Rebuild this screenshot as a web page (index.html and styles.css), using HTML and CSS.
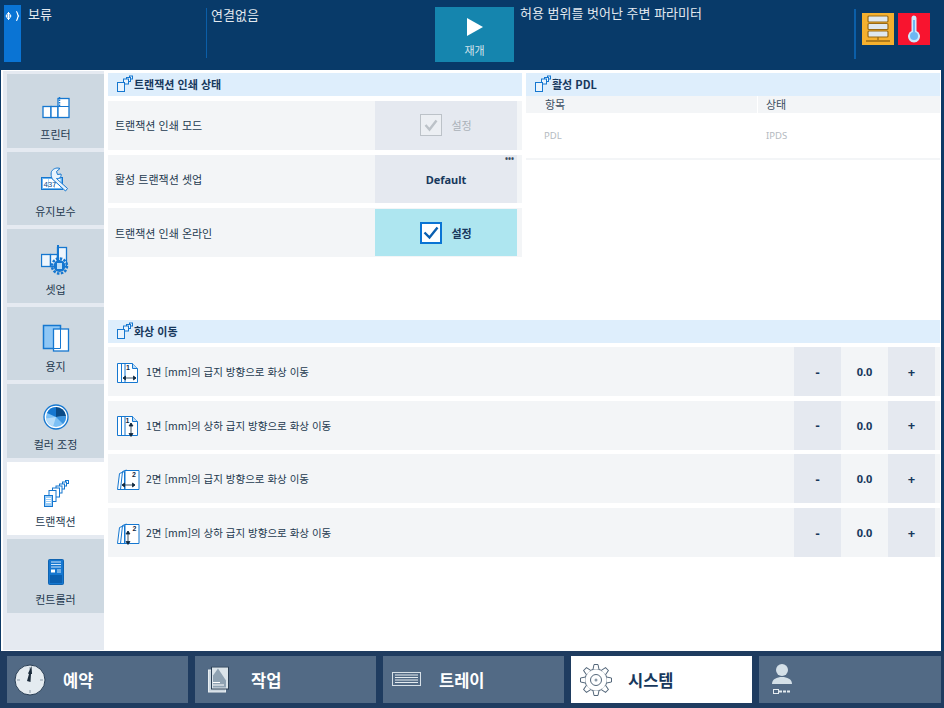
FILE: index.html
```html
<!DOCTYPE html>
<html lang="ko">
<head>
<meta charset="utf-8">
<title>트랜잭션</title>
<link rel="stylesheet" href="styles.css">
</head>
<body>
<svg class="defs" width="0" height="0" aria-hidden="true">
  <symbol id="tx-small" viewBox="0 0 18 18">
    <g fill="#eaf4fd" stroke="#1577d0" stroke-width="1">
      <rect x="13.500" y="1" width="3" height="3"/>
      <rect x="10.500" y="2.500" width="4" height="4"/>
      <rect x="7.500" y="4" width="5" height="5"/>
      <rect x="1.500" y="7.500" width="7" height="9"/>
    </g>
  </symbol>
  <symbol id="shift" viewBox="0 0 24 24">
    <path d="M1.500 3.500h15l5 5v14h-20z" fill="#fff" stroke="#1577d0"/>
    <path d="M5.500 3.500v19M9 3.500v19" stroke="#1577d0" fill="none"/>
    <path d="M16.500 3.500v5h5" fill="#bcdcf7" stroke="#1577d0"/>
  </symbol>
  <symbol id="tooth" viewBox="0 0 34 34">
    <path d="M14 6.500L15 1.500H19L20 6.500" fill="#fff" stroke="#54677a"/>
  </symbol>
</svg>
<div class="app">
  <header class="topbar">
    <div class="hold"><svg width="17" height="12" viewBox="0 0 17 12"><path d="M2 6h5M4.500 2v8M4 3l-2 3 2 3M5 3l2 3-2 3" stroke="#fff" fill="none"/><path d="M12 1.500c2 0 1 3 2.500 4.500-1.500 1.500-.5 4.500-2.500 4.500" stroke="#fff" fill="none" stroke-width="1.200"/></svg></div>
    <div class="status status-hold">보류</div>
    <div class="status status-conn">연결없음</div>
    <button class="resume" type="button">
      <svg width="16" height="18" viewBox="0 0 16 18"><path d="M0 0l16 9-16 9z" fill="#fff"/></svg>
      <span>재개</span>
    </button>
    <div class="status status-env">허용 범위를 벗어난 주변 파라미터</div>
    <div class="alerts">
      <div class="alert alert-amber">
        <svg width="24" height="30" viewBox="0 0 24 30"><g fill="#dfe8ef" stroke="#9a6a14" stroke-width="1.200"><rect x="2" y="2" width="20" height="6" rx="1"/><rect x="2" y="9.500" width="20" height="6" rx="1"/><rect x="2" y="17" width="20" height="6" rx="1"/></g><path d="M12 23v3M0 27h24" stroke="#9a6a14" stroke-width="1.300" fill="none"/></svg>
      </div>
      <div class="alert alert-red">
        <svg width="14" height="28" viewBox="0 0 14 28"><path d="M4.500 3a2.500 2.500 0 0 1 5 0v13a6 6 0 1 1-5 0z" fill="#cfe8fb"/><path d="M6 5h2v12h-2z" fill="#6db6f2"/><circle cx="7" cy="21" r="4" fill="#6db6f2"/></svg>
      </div>
    </div>
  </header>

  <main class="main">
    <nav class="sidebar">
      <a class="tile">
        <svg class="tile-icon" width="28" height="24" viewBox="0 0 28 24"><g fill="#fff" stroke="#1577d0" stroke-width="1.300"><rect x="1" y="10.500" width="8" height="11"/><rect x="9" y="10.500" width="7" height="11"/><rect x="16" y="2.500" width="11" height="19"/></g><path d="M16 10.500h11" stroke="#1577d0"/><path d="M17.500 1v9" stroke="#1577d0" stroke-width="1.500" stroke-dasharray="1.500 1"/></svg>
        <span>프린터</span>
      </a>
      <a class="tile">
        <svg class="tile-icon" width="30" height="30" viewBox="0 0 30 30"><rect x="0.500" y="10.500" width="21" height="12" fill="#6db6f2" stroke="#1577d0"/><rect x="2" y="12" width="5.500" height="9" fill="#fff"/><rect x="8" y="12" width="5.500" height="9" fill="#fff"/><rect x="14" y="12" width="5.500" height="9" fill="#fff"/><text class="digits" x="2.500" y="20">437</text><path d="M10.500 4.500c2-3.500 6-4 8.500-3l-3.500 3 1 3 3.500-.5c.8 2.500-1.500 5-4.500 4.500l11 10-2 2.500-11.500-10.500c-2.500-1-3.500-6-2.500-9z" fill="#e8f3fc" stroke="#1577d0"/></svg>
        <span>유지보수</span>
      </a>
      <a class="tile">
        <svg class="tile-icon" width="30" height="30" viewBox="0 0 30 30"><g fill="#eef6fd" stroke="#1577d0" stroke-width="1.300"><rect x="0.500" y="9.500" width="9" height="12"/><rect x="9.500" y="9.500" width="7" height="12"/><rect x="16.500" y="2.500" width="9" height="19"/></g><path d="M17 0v16" stroke="#1577d0" stroke-width="2"/><circle cx="18.500" cy="21" r="6" fill="#1577d0"/><circle cx="18.500" cy="21" r="7.500" fill="none" stroke="#1577d0" stroke-width="2.500" stroke-dasharray="2.500 1.430"/><rect x="16" y="18" width="5" height="6" fill="#b9dcf7"/></svg>
        <span>셋업</span>
      </a>
      <a class="tile">
        <svg class="tile-icon" width="28" height="28" viewBox="0 0 28 28"><rect x="1.500" y="1.500" width="17" height="23" fill="#8fc7f5" stroke="#1577d0" stroke-width="1.500"/><rect x="11.500" y="5" width="15" height="22" fill="#fff" stroke="#1577d0" stroke-width="1.300"/><path d="M11.500 24.500h7V5" fill="none" stroke="#1577d0"/></svg>
        <span>용지</span>
      </a>
      <a class="tile">
        <svg class="tile-icon" width="26" height="26" viewBox="0 0 26 26"><circle cx="13" cy="13" r="12" fill="#fff" stroke="#1577d0" stroke-width="1.300"/><circle cx="13" cy="13" r="10" fill="#7cc0f5"/><path d="M13 13L4 9A10 10 0 0 1 13 3z" fill="#1577d0"/><path d="M13 13V3a10 10 0 0 1 10 9z" fill="#0a4a86"/><path d="M13 13l10-1a10 10 0 0 1-3 8z" fill="#3a93df"/><path d="M13 13l-3 9.500a10 10 0 0 1-7-8z" fill="#b5dcf9"/></svg>
        <span>컬러 조정</span>
      </a>
      <a class="tile tile-active">
        <svg class="tile-icon" width="26" height="28" viewBox="0 0 26 28"><g fill="#fff" stroke="#1577d0"><rect x="22.500" y="1.500" width="3" height="3"/><rect x="19.500" y="3" width="4" height="4"/><rect x="16.500" y="5" width="5" height="5"/><rect x="13" y="7" width="6" height="7"/><rect x="9.500" y="9" width="7" height="9"/><rect x="6" y="11.500" width="7" height="11"/></g><rect x="1.500" y="16.500" width="8" height="11" fill="#9ccdf6" stroke="#1577d0"/><path d="M3 19.500h5M3 21.500h5M3 23.500h5" stroke="#fff"/></svg>
        <span>트랜잭션</span>
      </a>
      <a class="tile">
        <svg class="tile-icon" width="16" height="26" viewBox="0 0 16 26"><rect x="0.500" y="0.500" width="15" height="25" rx="1" fill="#1577d0" stroke="#0f63b0"/><path d="M3 3h10M3 5.500h10M3 8h10" stroke="#cfe6fa"/><rect x="3" y="10.500" width="4" height="3" fill="#fff"/><path d="M9 11h4M9 13h4" stroke="#cfe6fa"/><rect x="2" y="16" width="12" height="8" fill="#0a5fb0"/></svg>
        <span>컨트롤러</span>
      </a>
    </nav>

    <section class="content">
      <div class="top-panels">
        <div class="panel">
          <h2 class="section-head"><svg class="head-icon" width="18" height="18"><use href="#tx-small"/></svg>트랜잭션 인쇄 상태</h2>
          <div class="rows rows-status">
            <div class="row">
              <div class="row-label">트랜잭션 인쇄 모드</div>
              <div class="cell cell-disabled">
                <span class="check check-off"><svg width="18" height="18" viewBox="0 0 18 18"><path d="M3.500 9l4 4.500 7-9" fill="none" stroke="#bcc2c8" stroke-width="2.400"/></svg></span>
                <span>설정</span>
              </div>
            </div>
            <div class="row">
              <div class="row-label">활성 트랜잭션 셋업</div>
              <div class="cell cell-default">Default<span class="dots">•••</span></div>
            </div>
            <div class="row">
              <div class="row-label">트랜잭션 인쇄 온라인</div>
              <div class="cell cell-on">
                <span class="check check-on"><svg width="18" height="18" viewBox="0 0 18 18"><path d="M2.500 8.500l5 5 8-10" fill="none" stroke="#0a5fb0" stroke-width="2.400"/></svg></span>
                <span>설정</span>
              </div>
            </div>
          </div>
        </div>
        <div class="panel">
          <h2 class="section-head"><svg class="head-icon" width="18" height="18"><use href="#tx-small"/></svg>활성 PDL</h2>
          <div class="table-head"><div class="col-item">항목</div><div class="col-state">상태</div></div>
          <div class="table-row"><div class="col-item">PDL</div><div class="col-state">IPDS</div></div>
        </div>
      </div>

      <div class="shift-panel">
        <h2 class="section-head"><svg class="head-icon" width="18" height="18"><use href="#tx-small"/></svg>화상 이동</h2>
        <div class="rows rows-shift">
          <div class="shift-row">
            <svg class="shift-icon" width="24" height="24" viewBox="0 0 24 24"><use href="#shift"/><text class="num" x="10" y="10">1</text><path d="M7 18h13M7 18l2.500-2v4zM20 18l-2.500-2v4z" stroke="#10283f" fill="#10283f" stroke-width=".8"/></svg>
            <div class="shift-label">1면 [mm]의 급지 방향으로 화상 이동</div>
            <button class="step" type="button">-</button><div class="value">0.0</div><button class="step" type="button">+</button>
          </div>
          <div class="shift-row">
            <svg class="shift-icon" width="24" height="24" viewBox="0 0 24 24"><use href="#shift"/><text class="num" x="9.500" y="10">1</text><path d="M15 10v13M15 10l-2 3h4zM15 23.500l-2-3h4z" stroke="#10283f" fill="#10283f" stroke-width=".8"/></svg>
            <div class="shift-label">1면 [mm]의 상하 급지 방향으로 화상 이동</div>
            <button class="step" type="button">-</button><div class="value">0.0</div><button class="step" type="button">+</button>
          </div>
          <div class="shift-row">
            <svg class="shift-icon" width="24" height="24" viewBox="0 0 24 24"><path d="M1.500 22.500l2-16 5-2v18zM4.500 22.500l2-18 4-1.500v19.500z" fill="#fff" stroke="#1577d0"/><path d="M9 3.500h14v19h-14z" fill="#fff" stroke="#1577d0"/><text class="num" x="16" y="9.500">2</text><path d="M6 18h13M6 18l2.500-2v4zM19 18l-2.500-2v4z" stroke="#10283f" fill="#10283f" stroke-width=".8"/></svg>
            <div class="shift-label">2면 [mm]의 급지 방향으로 화상 이동</div>
            <button class="step" type="button">-</button><div class="value">0.0</div><button class="step" type="button">+</button>
          </div>
          <div class="shift-row">
            <svg class="shift-icon" width="24" height="24" viewBox="0 0 24 24"><path d="M1.500 22.500l2-16 5-2v18zM4.500 22.500l2-18 4-1.500v19.500z" fill="#fff" stroke="#1577d0"/><path d="M9 3.500h14v19h-14z" fill="#fff" stroke="#1577d0"/><text class="num" x="16.500" y="9.500">2</text><path d="M12 10v13M12 10l-2 3h4zM12 23.500l-2-3h4z" stroke="#10283f" fill="#10283f" stroke-width=".8"/></svg>
            <div class="shift-label">2면 [mm]의 상하 급지 방향으로 화상 이동</div>
            <button class="step" type="button">-</button><div class="value">0.0</div><button class="step" type="button">+</button>
          </div>
        </div>
      </div>
    </section>
  </main>

  <footer class="tabs">
    <a class="tab">
      <svg class="tab-icon tab-icon-clock" width="32" height="32" viewBox="0 0 32 32"><circle cx="16" cy="16" r="15" fill="#e4ebf0" stroke="#2a3f55"/><path d="M16 3v3M16 26v3M3 16h3M26 16h3" stroke="#8b9aa8"/><path d="M13 17l2-7-1-.5L17.500 2 18 10l-1 0-.5 8z" fill="#1c2c3c"/></svg>
      <span>예약</span>
    </a>
    <a class="tab">
      <svg class="tab-icon tab-icon-doc" width="22" height="27" viewBox="0 0 22 27"><rect x="0.500" y="3.500" width="17" height="22" fill="#cbd6df" stroke="#e8eef2"/><rect x="3.500" y="0.500" width="17" height="22" fill="#dbe4ea" stroke="#2a3f55"/><path d="M10 2l8 12v7H5V9z" fill="#8fa2b2"/><path d="M5 16l7 0M5 18.500h11" stroke="#fff"/></svg>
      <span>작업</span>
    </a>
    <a class="tab">
      <svg class="tab-icon tab-icon-tray" width="30" height="16" viewBox="0 0 30 16"><rect x="0.500" y="0.500" width="28" height="13" fill="#526a85" stroke="#d7e0e7"/><path d="M3 3h23M3 5.500h23M3 8h23M3 10.500h23" stroke="#e4ebf0"/></svg>
      <span>트레이</span>
    </a>
    <a class="tab tab-active">
      <svg class="tab-icon" width="34" height="34" viewBox="0 0 34 34"><circle cx="17" cy="17" r="11" fill="#fff" stroke="#54677a"/>
        <use href="#tooth"/>
        <use href="#tooth" transform="rotate(45 17 17)"/>
        <use href="#tooth" transform="rotate(90 17 17)"/>
        <use href="#tooth" transform="rotate(135 17 17)"/>
        <use href="#tooth" transform="rotate(180 17 17)"/>
        <use href="#tooth" transform="rotate(225 17 17)"/>
        <use href="#tooth" transform="rotate(270 17 17)"/>
        <use href="#tooth" transform="rotate(315 17 17)"/>
        <circle cx="17" cy="17" r="5.500" fill="#fff" stroke="#54677a"/><circle cx="17" cy="17" r="1.500" fill="#8b9aa8"/></svg>
      <span>시스템</span>
    </a>
    <a class="tab tab-user">
      <svg width="20" height="34" viewBox="0 0 20 34"><circle cx="10" cy="7" r="6" fill="#d4e0e8"/><path d="M0 21c0-5 5-7 10-7s10 2 10 7z" fill="#d4e0e8"/><rect x="1.500" y="26.500" width="5" height="4" fill="#526a85" stroke="#e4ebf0"/><path d="M7 28.500h12" stroke="#e4ebf0" stroke-width="2" stroke-dasharray="3 1"/></svg>
    </a>
  </footer>
</div>
</body>
</html>
```
FILE: styles.css
```css
* { box-sizing: border-box; }
html, body { margin: 0; padding: 0; }
body {
  width: 944px;
  height: 708px;
  overflow: hidden;
  font-family: "Noto Sans CJK KR", "Noto Sans", sans-serif;
  font-size: 11px;
  color: #17385c;
}
.defs { display: block; height: 0; }
.app { display: flex; flex-direction: column; width: 944px; height: 708px; background: #0d3a66; }

/* top bar */
.topbar { display: flex; height: 70px; flex: none; background: #083a69; color: #e3e9ef; font-size: 13px; line-height: 18px; }
.hold { width: 17px; height: 57px; margin: 5px 0 0 4px; background: #0a74d4; padding-top: 5px; flex: none; }
.hold svg { display: block; }
.status { padding-top: 5px; flex: none; }
.status-hold { width: 185px; padding-left: 7px; }
.status-conn { width: 229px; margin-top: 8px; padding: 0 0 0 4px; border-left: 1px solid #0b5ea8; height: 50px; line-height: 14px; }
.resume {
  width: 79px; height: 55px; margin-top: 7px; flex: none; padding: 11px 0 0;
  display: flex; flex-direction: column; align-items: center;
  background: #1585ae; border: 0; color: #d3e3ec; font: inherit; font-size: 11px; line-height: 14px;
}
.resume svg { display: block; margin-bottom: 7px; }
.status-env { width: 340px; padding-left: 6px; padding-top: 4px; }
.alerts { display: flex; gap: 4px; height: 50px; margin-top: 9px; padding: 4px 0 0 6px; border-left: 2px solid #0b5ea8; }
.alert { width: 32px; height: 32px; display: flex; align-items: center; justify-content: center; }
.alert-amber { background: #f5b02e; }
.alert-red { background: #f8142f; }

/* main frame */
.main { flex: none; height: 581px; margin: 0 3px 0 1px; display: flex; background: #fff; }
.sidebar {
  width: 101px; margin: 1px 0 1px 2px; padding: 3px 0 0 4px; flex: none;
  background: #e5eaf1; display: grid; grid-auto-rows: 73.5px; row-gap: 4px; align-content: start;
}
.tile { display: flex; flex-direction: column; align-items: center; justify-content: flex-end; background: #cdd8e1; position: relative; padding-bottom: 28px; height: 73.5px; }
.tile span { position: absolute; top: 51.6px; left: 0; right: 0; text-align: center; line-height: 16px; color: #24394f; }
.tile-icon { display: block; flex: none; }
.tile-active { background: #fff; }
.digits { font-family: "Liberation Sans", sans-serif; font-size: 8px; letter-spacing: -.2px; fill: #0f4f90; }

/* content */
.content { flex: 1; min-width: 0; padding: 3px 1px 0 4px; }
.top-panels { display: flex; gap: 4px; }
.panel { width: 414px; flex: none; }
.section-head {
  display: flex; align-items: center; height: 23px; margin: 0;
  background: #deeefc; padding: 0 0 2px 8px; font-size: 11px; font-weight: 700; color: #17385c;
}
.head-icon { flex: none; }
.rows { display: grid; }
.rows-status { margin-top: 5px; row-gap: 5px; grid-auto-rows: 48.7px; }
.row { display: flex; background: #f3f5f7; padding-right: 5px; }
.row-label { flex: 1; padding-left: 7px; display: flex; align-items: center; color: #24394f; }
.cell { width: 142px; flex: none; display: flex; align-items: center; justify-content: center; background: #e5e9f0; position: relative; }
.cell-disabled { color: #aab1b8; gap: 9px; }
.cell-default { font-family: "Noto Sans", sans-serif; font-weight: 700; color: #17385c; }
.cell-on { background: #aee6f0; font-weight: 700; gap: 9px; margin: 1px 0; color: #17385c; }
.dots { position: absolute; top: 0; right: 3px; font-size: 8px; line-height: 7px; color: #3a4d60; }
.check { width: 22px; height: 22px; display: flex; align-items: center; justify-content: center; background: #fff; }
.check-off { border: 1px solid #bcc2c8; background: #eceff3; }
.check-on { border: 2px solid #0a74d4; }

.table-head { display: flex; height: 17px; background: #f3f5f7; line-height: 17px; color: #3a4d60; }
.table-row { display: flex; height: 47px; align-items: center; border-bottom: 2px solid #f3f5f7; color: #b4bac1; font-family: "Noto Sans", sans-serif; font-size: 9.5px; }
.col-item { width: 222px; padding-left: 18px; }
.col-state { flex: 1; padding-left: 18px; }
.table-head .col-item { padding-left: 19px; }
.table-head .col-state { border-left: 1px solid #fff; padding-left: 8px; margin-left: 9px; }

.shift-panel { margin-top: 63px; }
.rows-shift { margin-top: 4px; row-gap: 4.700px; grid-auto-rows: 49px; }
.shift-row { display: flex; align-items: stretch; background: #f3f5f7; padding-right: 5px; }
.shift-icon { align-self: center; flex: none; margin: 0 6px 0 8px; }
.shift-label { flex: 1; display: flex; align-items: center; font-size: 10.5px; color: #24394f; }
.step { width: 47px; flex: none; border: 0; padding: 0; background: #e5e9f0; color: #17385c; font-family: "Noto Sans", sans-serif; font-size: 13px; font-weight: 700; }
.value { width: 47px; flex: none; display: flex; align-items: center; justify-content: center; font-family: "Noto Sans", sans-serif; font-weight: 700; color: #17385c; }
.num { font-family: "Liberation Sans", sans-serif; font-size: 7px; font-weight: 700; fill: #10283f; }

/* bottom tabs */
.tabs { flex: 1; display: flex; gap: 7px; padding: 5px 3px 0 7px; background: #1f3c60; }
.tab { width: 181px; height: 47px; display: flex; align-items: center; background: #526a85; color: #fff; font-size: 16.5px; font-weight: 700; position: relative; }
.tab span { position: absolute; left: 56px; }
.tab-icon { position: absolute; left: 8px; top: 50%; transform: translateY(-50%); }
.tab-icon-clock { left: 7px; }
.tab-icon-doc { left: 13px; }
.tab-icon-tray { left: 9px; }
.tab-active { background: #fff; color: #17385c; }
.tab-active span { left: 57px; }
.tab-user { width: 182px; padding-left: 13px; }
```
